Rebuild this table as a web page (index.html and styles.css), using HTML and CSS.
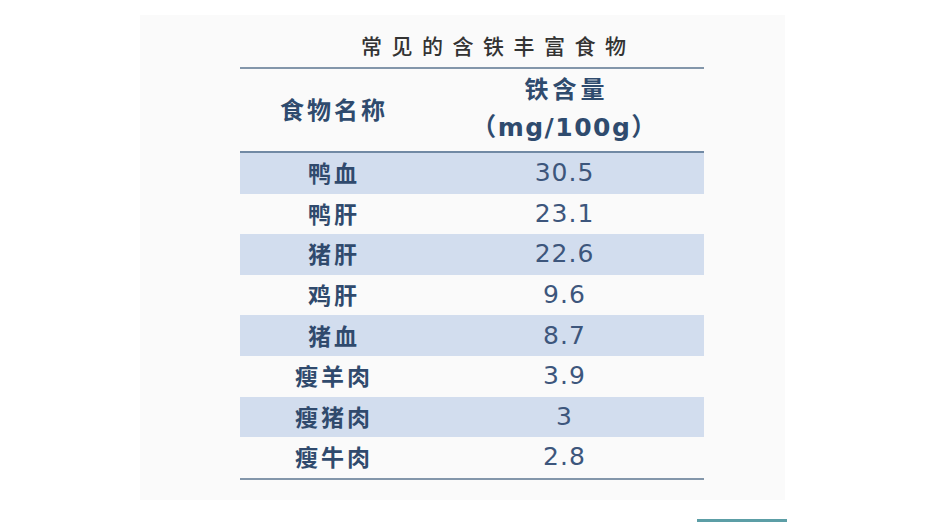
FILE: index.html
```html
<!DOCTYPE html>
<html lang="zh-CN">
<head>
<meta charset="utf-8">
<title>常见的含铁丰富食物</title>
<link rel="stylesheet" href="styles.css">
</head>
<body>
<div class="panel">
  <div class="title">常见的含铁丰富食物</div>
  <div class="table">
    <div class="head">
      <div class="hcell name">食物名称</div>
      <div class="hcell val"><span class="h1">铁含量</span><span class="h2">（mg/100g）</span></div>
    </div>
    <div class="row band"><div class="c name">鸭血</div><div class="c num">30.5</div></div>
    <div class="row"><div class="c name">鸭肝</div><div class="c num">23.1</div></div>
    <div class="row band"><div class="c name">猪肝</div><div class="c num">22.6</div></div>
    <div class="row"><div class="c name">鸡肝</div><div class="c num">9.6</div></div>
    <div class="row band"><div class="c name">猪血</div><div class="c num">8.7</div></div>
    <div class="row"><div class="c name">瘦羊肉</div><div class="c num">3.9</div></div>
    <div class="row band"><div class="c name">瘦猪肉</div><div class="c num">3</div></div>
    <div class="row"><div class="c name">瘦牛肉</div><div class="c num">2.8</div></div>
  </div>
</div>
<div class="teal"></div>
</body>
</html>
```
FILE: styles.css
```css
* { box-sizing: border-box; }
html, body { margin: 0; padding: 0; background: #ffffff; }
body { font-family: "Noto Sans CJK SC", "DejaVu Sans", sans-serif; }

.panel {
  margin: 15px 0 0 140px;
  width: 645px;
  height: 485px;
  background: #fafafa;
  padding: 22px 0 0 100px;
}

.title {
  height: 30px;
  padding-left: 121px;
  font-size: 21px;
  font-weight: 500;
  line-height: 16px;
  letter-spacing: 9.5px;
  color: #333333;
  white-space: nowrap;
}

.table {
  width: 464px;
  border-top: 2px solid #8396aa;
  border-bottom: 2px solid #8396aa;
}

.head {
  display: grid;
  grid-template-columns: 185px 279px;
  height: 84px;
  border-bottom: 2px solid #7189a4;
  color: #2f4b6e;
  font-weight: 700;
}

.hcell {
  display: flex;
  flex-direction: column;
  align-items: center;
  justify-content: center;
}

.hcell.name {
  font-size: 24px;
  letter-spacing: 3px;
  padding-left: 3px;
  padding-bottom: 4px;
}

.h1 {
  font-size: 24px;
  letter-spacing: 4px;
  line-height: 30px;
  padding-left: 4px;
  margin-top: -2px;
}

.h2 {
  font-family: "DejaVu Sans", "Noto Sans CJK SC", sans-serif;
  font-size: 25px;
  line-height: 34px;
  margin-top: 8px;
  letter-spacing: 1.5px;
}

.row {
  display: grid;
  grid-template-columns: 185px 279px;
  height: 40.6px;
  align-items: center;
  color: #34507a;
}

.row.band { background: #d2ddee; }

.c { text-align: center; }

.c.name {
  font-size: 23px;
  font-weight: 700;
  letter-spacing: 3px;
  padding-left: 3px;
  line-height: 30px;
  margin-top: -2px;
  color: #304a6d;
}

.c.num {
  font-family: "DejaVu Sans", sans-serif;
  font-size: 25px;
  letter-spacing: 1px;
  line-height: 30px;
  color: #3d567c;
}

.teal {
  margin: 19px 0 0 697px;
  width: 90px;
  height: 3px;
  background: #5c9ea6;
}
```
